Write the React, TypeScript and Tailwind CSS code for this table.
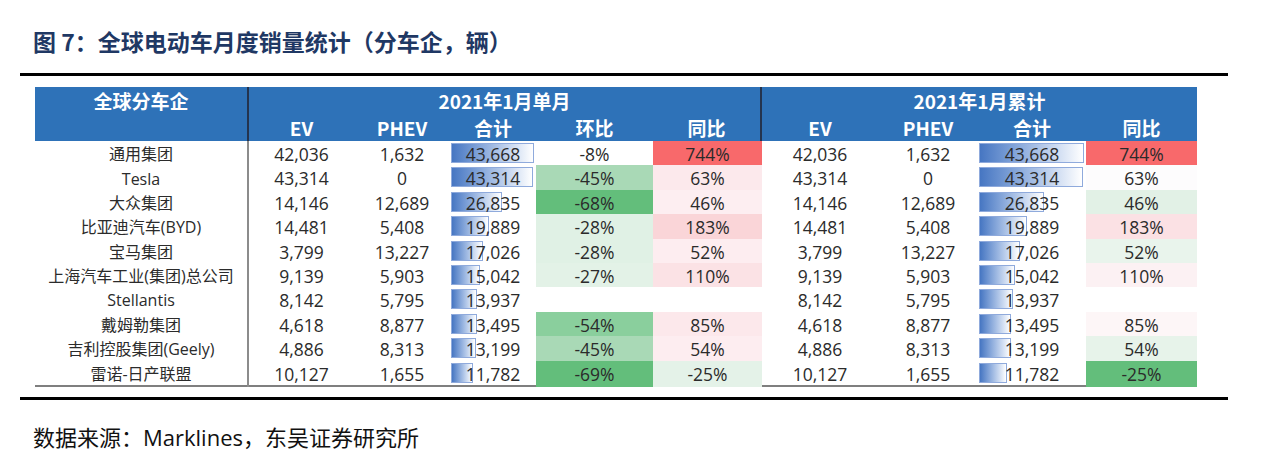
import React from "react";

type Row = {
  name: string;
  ev: string;
  phev: string;
  total: number;
  hb: string;
  hbBg: string;
  yb: string;
  ybBg: string;
  yb2: string;
  yb2Bg: string;
};

const rows: Row[] = [
  { name: "通用集团", ev: "42,036", phev: "1,632", total: 43668, hb: "-8%", hbBg: "bg-white", yb: "744%", ybBg: "bg-[#f8696b]", yb2: "744%", yb2Bg: "bg-[#f8696b]" },
  { name: "Tesla", ev: "43,314", phev: "0", total: 43314, hb: "-45%", hbBg: "bg-[#a9d9b6]", yb: "63%", ybBg: "bg-[#fce9ec]", yb2: "63%", yb2Bg: "bg-[#fdfcfd]" },
  { name: "大众集团", ev: "14,146", phev: "12,689", total: 26835, hb: "-68%", hbBg: "bg-[#63be7b]", yb: "46%", ybBg: "bg-[#fdeef1]", yb2: "46%", yb2Bg: "bg-[#e2f1e6]" },
  { name: "比亚迪汽车(BYD)", ev: "14,481", phev: "5,408", total: 19889, hb: "-28%", hbBg: "bg-[#e0f1e5]", yb: "183%", ybBg: "bg-[#fad5d8]", yb2: "183%", yb2Bg: "bg-[#fbe1e4]" },
  { name: "宝马集团", ev: "3,799", phev: "13,227", total: 17026, hb: "-28%", hbBg: "bg-[#e0f1e5]", yb: "52%", ybBg: "bg-[#fdedf0]", yb2: "52%", yb2Bg: "bg-[#e9f4ec]" },
  { name: "上海汽车工业(集团)总公司", ev: "9,139", phev: "5,903", total: 15042, hb: "-27%", hbBg: "bg-[#e3f2e7]", yb: "110%", ybBg: "bg-[#fbe2e5]", yb2: "110%", yb2Bg: "bg-[#fcf1f3]" },
  { name: "Stellantis", ev: "8,142", phev: "5,795", total: 13937, hb: "", hbBg: "bg-white", yb: "", ybBg: "bg-white", yb2: "", yb2Bg: "bg-white" },
  { name: "戴姆勒集团", ev: "4,618", phev: "8,877", total: 13495, hb: "-54%", hbBg: "bg-[#8acf9d]", yb: "85%", ybBg: "bg-[#fce8eb]", yb2: "85%", yb2Bg: "bg-[#fdf6f7]" },
  { name: "吉利控股集团(Geely)", ev: "4,886", phev: "8,313", total: 13199, hb: "-45%", hbBg: "bg-[#a9d9b6]", yb: "54%", ybBg: "bg-[#fdedf0]", yb2: "54%", yb2Bg: "bg-[#e7f3ea]" },
  { name: "雷诺-日产联盟", ev: "10,127", phev: "1,655", total: 11782, hb: "-69%", hbBg: "bg-[#63be7b]", yb: "-25%", ybBg: "bg-[#e4f2e8]", yb2: "-25%", yb2Bg: "bg-[#63be7b]" },
];

const MAX = 43668;

const cols =
  "grid grid-cols-[214px_105px_96px_86px_117px_109px_116px_100px_108px_111px]";

const DataBar = ({ value, full }: { value: number; full: number }) => (
  <div className="relative h-full flex items-center justify-center">
    <div
      className="absolute left-[1px] top-[2px] h-[20px] border border-[#8faadc] bg-linear-to-r from-[#4676c2] to-white"
      style={{ width: (value / MAX) * full }}
    />
    <span className="relative">{value.toLocaleString("en-US")}</span>
  </div>
);

const App = () => {
  return (
    <div className="w-[1280px] h-[469px] bg-white overflow-hidden font-['Open_Sans','Noto_Sans_CJK_SC',sans-serif]">
      <h1 className="pl-[33px] pt-[25px] leading-[32px] text-[23px] font-bold text-[#1f3864] font-['Noto_Sans_CJK_SC',sans-serif]">
        图 7：全球电动车月度销量统计（分车企，辆）
      </h1>
      <div className="ml-[20px] mt-[16px] w-[1208px] h-[3px] bg-black" />

      <div className="ml-[35px] mt-[11px] w-[1162px] text-[17.5px] text-[#2b2b2b]">
        <div className="bg-[#2e72b8] text-white font-bold text-[19px] font-['Noto_Sans_CJK_SC',sans-serif]">
          <div className={`${cols} h-[27px] items-center`}>
            <div className="h-full flex items-center justify-center border-r-2 border-[#24344f]">
              全球分车企
            </div>
            <div className="col-span-5 h-full flex items-center justify-center border-r-2 border-[#24344f]">
              2021年1月单月
            </div>
            <div className="col-span-4 h-full flex items-center justify-center">
              2021年1月累计
            </div>
          </div>
          <div className={`${cols} h-[27px]`}>
            <div className="border-r-2 border-[#24344f]" />
            <div className="flex items-center justify-center">EV</div>
            <div className="flex items-center justify-center">PHEV</div>
            <div className="flex items-center justify-center">合计</div>
            <div className="flex items-center justify-center">环比</div>
            <div className="flex items-center justify-center border-r-2 border-[#24344f]">同比</div>
            <div className="flex items-center justify-center">EV</div>
            <div className="flex items-center justify-center">PHEV</div>
            <div className="flex items-center justify-center">合计</div>
            <div className="flex items-center justify-center">同比</div>
          </div>
        </div>

        <div className="border-b-2 border-[#7f7f7f]">
          {rows.map((r) => (
            <div key={r.name} className={`${cols} h-[24.4px]`}>
              <div className="flex items-center justify-center border-r-2 border-[#8c8c8c] whitespace-nowrap text-[16px]">
                {r.name}
              </div>
              <div className="flex items-center justify-center">{r.ev}</div>
              <div className="flex items-center justify-center">{r.phev}</div>
              <DataBar value={r.total} full={83} />
              <div className={`flex items-center justify-center ${r.hbBg}`}>{r.hb}</div>
              <div className={`flex items-center justify-center ${r.ybBg}`}>{r.yb}</div>
              <div className="flex items-center justify-center">{r.ev}</div>
              <div className="flex items-center justify-center">{r.phev}</div>
              <DataBar value={r.total} full={105} />
              <div className={`flex items-center justify-center ${r.yb2Bg}`}>{r.yb2}</div>
            </div>
          ))}
        </div>
      </div>

      <div className="ml-[20px] mt-[10px] w-[1208px] h-[3px] bg-black" />
      <p className="pl-[33px] mt-[22px] leading-[30px] text-[22px] text-[#111]">
        数据来源：Marklines，东吴证券研究所
      </p>
    </div>
  );
};

export default App;
